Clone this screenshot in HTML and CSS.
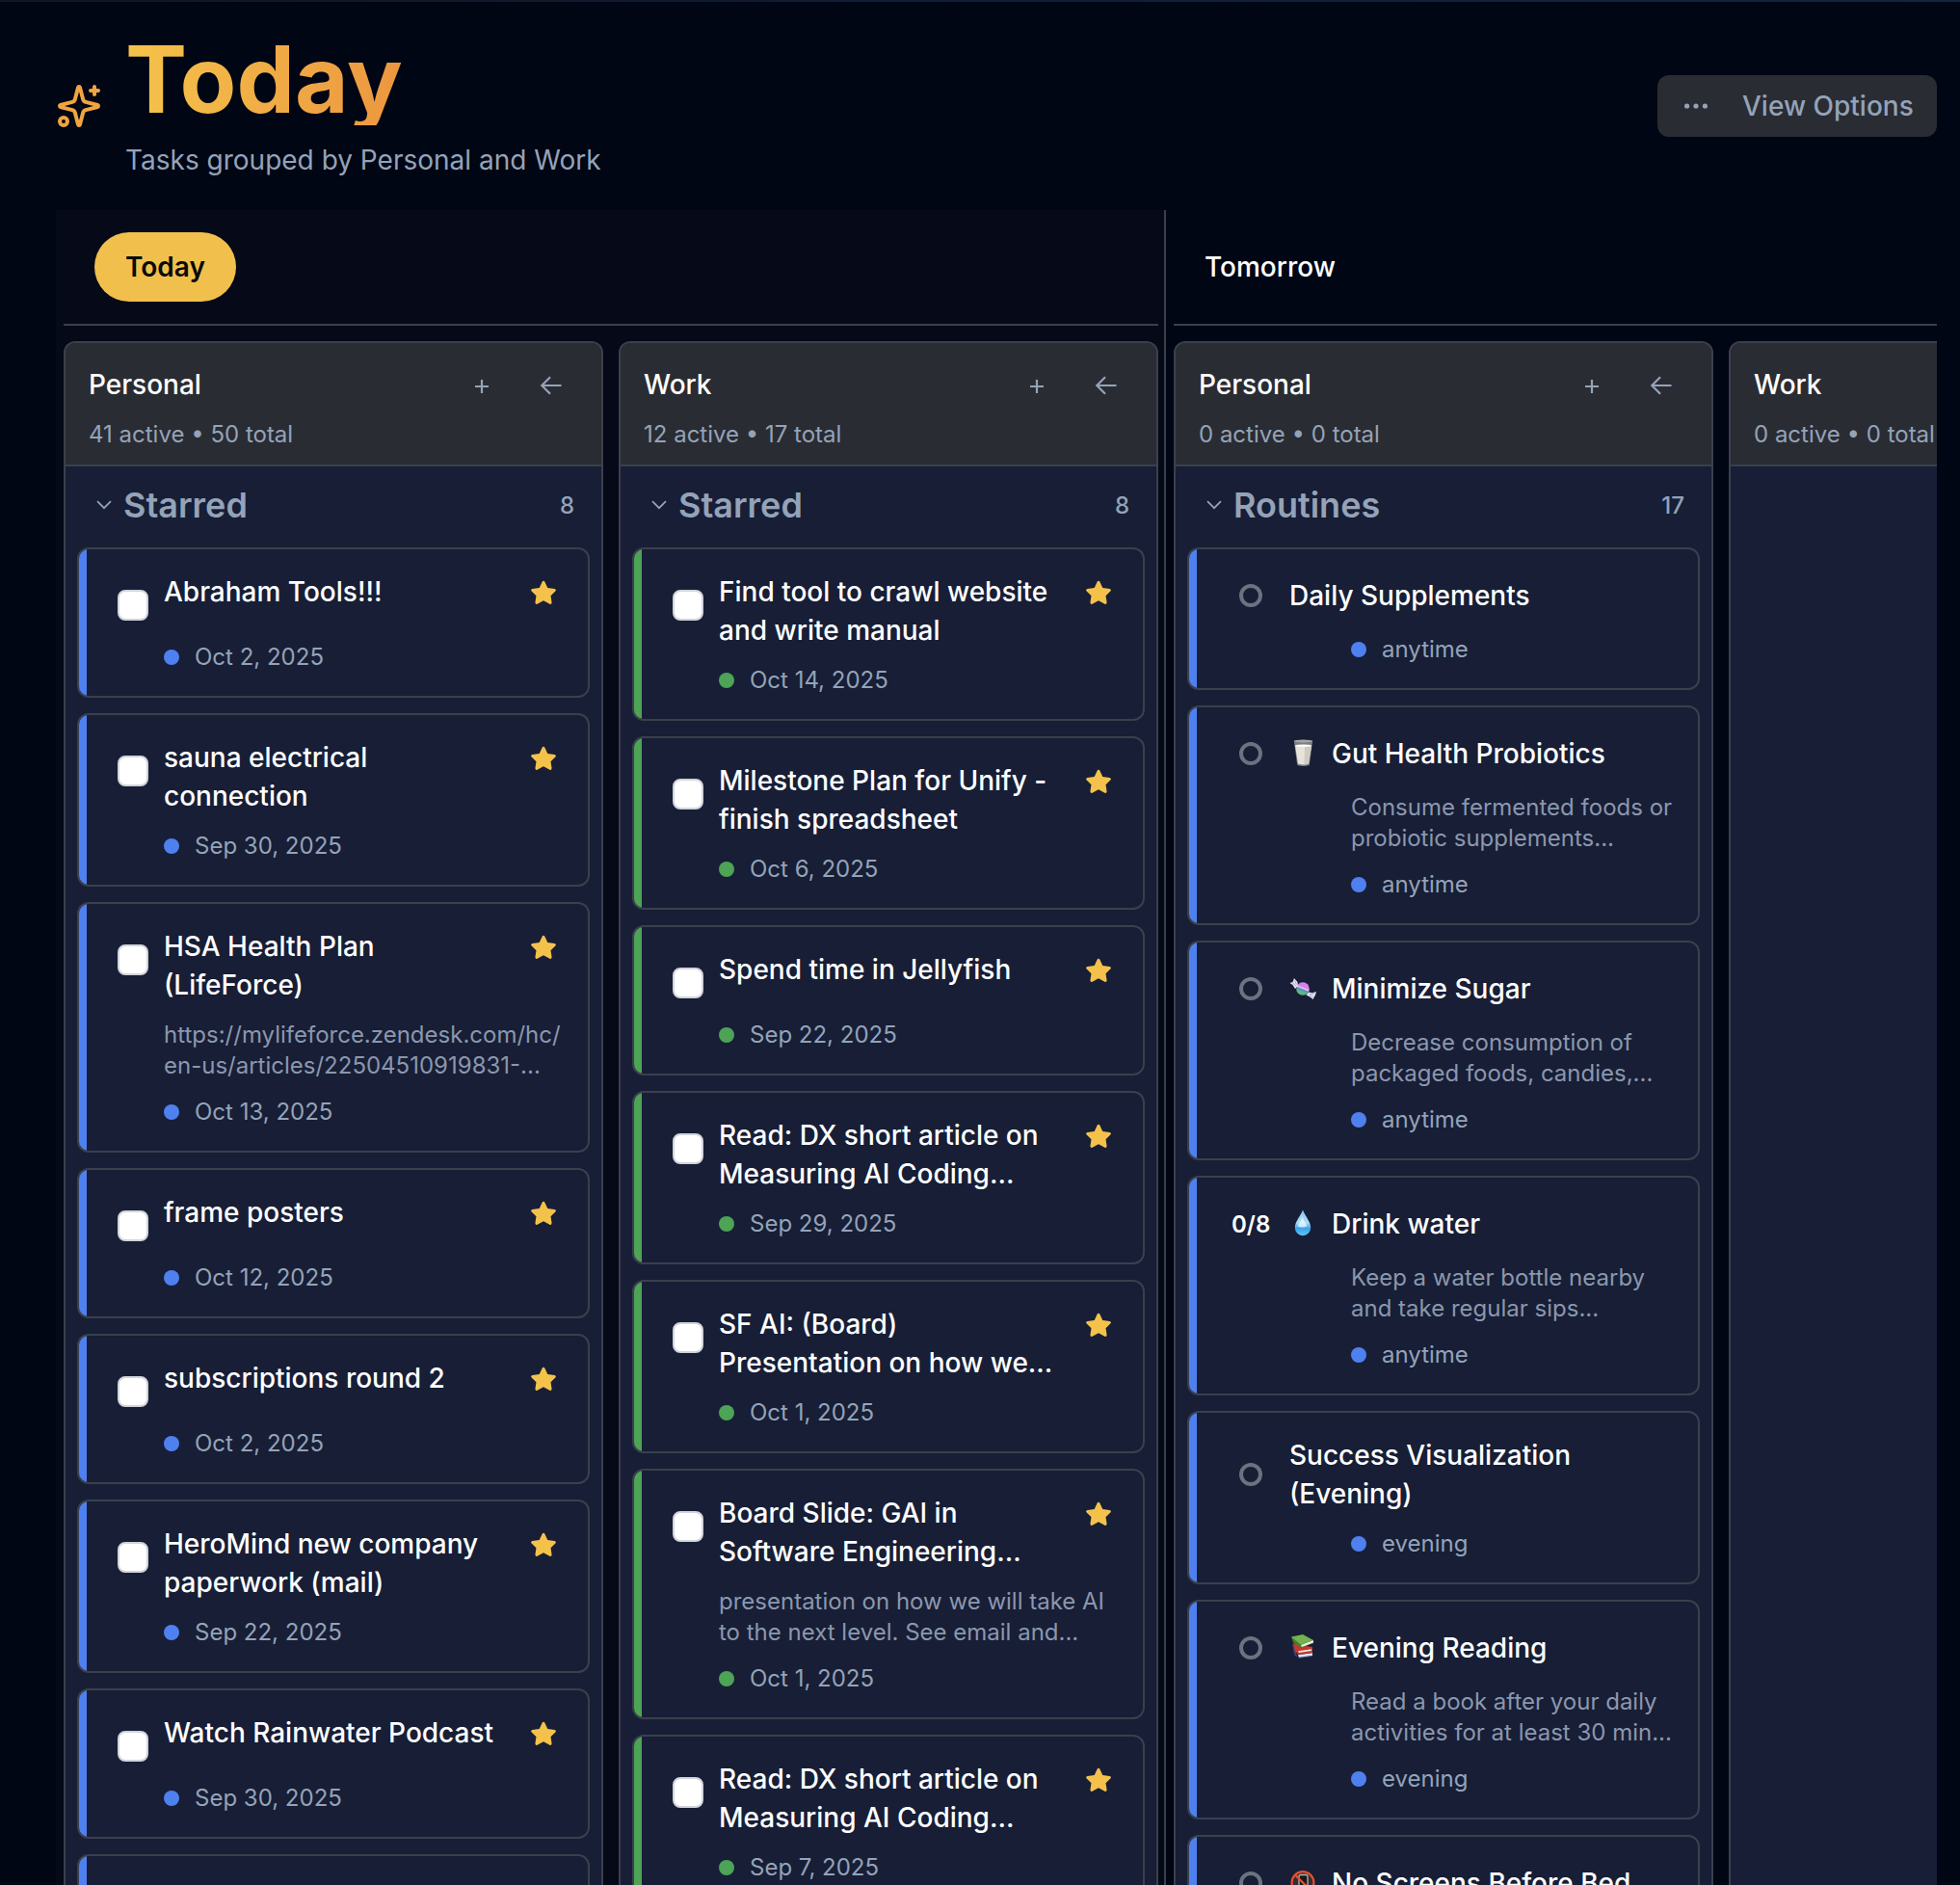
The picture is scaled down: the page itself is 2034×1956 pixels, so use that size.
FILE: index.html
```html
<!DOCTYPE html>
<html lang="en">
<head>
<meta charset="utf-8">
<title>Today</title>
<link rel="stylesheet" href="styles.css">
</head>
<body>
<svg class="sprite" aria-hidden="true">
  <symbol id="star" viewBox="0 0 28 28"><path d="M14 2.6 Q14.9 2.6 15.4 3.7 L18 9.3 L24.700 10.300 Q26.900 10.900 25.500 12.700 L21 17.100 L22 23.400 Q22.100 25.700 20 24.900 L14 21.800 L8 24.900 Q5.900 25.700 6 23.400 L7 17.100 L2.500 12.700 Q1.100 10.900 3.300 10.300 L10 9.300 L12.600 3.700 Q13.100 2.600 14 2.600 Z" fill="#f4c24b"/></symbol>
  <symbol id="plus" viewBox="0 0 16 16"><path d="M8 1v14M1 8h14" stroke="currentColor" stroke-width="2.200" fill="none"/></symbol>
  <symbol id="arrow" viewBox="0 0 24 20"><path d="M22.500 10H2.500M11 1.300L2.300 10L11 18.700" stroke="currentColor" stroke-width="2.200" fill="none"/></symbol>
  <symbol id="chev" viewBox="0 0 16 10"><path d="M1 1.200l7 7l7-7" stroke="currentColor" stroke-width="1.700" fill="none"/></symbol>
</svg>
<div class="app">
  <header class="top">
    <svg class="sparkle" viewBox="0 0 24 24"><path d="M9.937 15.500A2 2 0 0 0 8.500 14.063l-6.135-1.582a.5.5 0 0 1 0-.962L8.500 9.936A2 2 0 0 0 9.937 8.500l1.582-6.135a.5.5 0 0 1 .963 0L14.063 8.500A2 2 0 0 0 15.500 9.937l6.135 1.581a.5.5 0 0 1 0 .964L15.500 14.063a2 2 0 0 0-1.437 1.437l-1.582 6.135a.5.5 0 0 1-.963 0zM20 2v4M22 4h-4"/><circle cx="4" cy="20" r="2"/></svg>
    <div class="heading">
      <h1>Today</h1>
      <p>Tasks grouped by Personal and Work</p>
    </div>
    <button class="options"><svg class="dots" viewBox="0 0 24 6"><circle cx="2.600" cy="3" r="2.600"/><circle cx="12" cy="3" r="2.600"/><circle cx="21.400" cy="3" r="2.600"/></svg>View Options</button>
  </header>
  <main class="board">
    <section class="day current">
      <div class="day-head"><span class="pill">Today</span></div>
      <div class="lists">
        <div class="list blue">
          <div class="list-head"><div class="row"><h2>Personal</h2><svg class="plus"><use href="#plus"/></svg><svg class="arrow"><use href="#arrow"/></svg></div><p>41 active • 50 total</p></div>
          <div class="group"><svg class="chev"><use href="#chev"/></svg><h3>Starred</h3><span>8</span></div>
          <article class="card"><i class="check"></i><div class="body"><h4>Abraham Tools!!!</h4><div class="meta">Oct 2, 2025</div></div><svg class="star"><use href="#star"/></svg></article>
          <article class="card"><i class="check"></i><div class="body"><h4>sauna electrical<br>connection</h4><div class="meta">Sep 30, 2025</div></div><svg class="star"><use href="#star"/></svg></article>
          <article class="card"><i class="check"></i><div class="body"><h4>HSA Health Plan<br>(LifeForce)</h4><p class="note">https://mylifeforce.zendesk.com/hc/<br>en-us/articles/22504510919831-...</p><div class="meta">Oct 13, 2025</div></div><svg class="star"><use href="#star"/></svg></article>
          <article class="card"><i class="check"></i><div class="body"><h4>frame posters</h4><div class="meta">Oct 12, 2025</div></div><svg class="star"><use href="#star"/></svg></article>
          <article class="card"><i class="check"></i><div class="body"><h4>subscriptions round 2</h4><div class="meta">Oct 2, 2025</div></div><svg class="star"><use href="#star"/></svg></article>
          <article class="card"><i class="check"></i><div class="body"><h4>HeroMind new company<br>paperwork (mail)</h4><div class="meta">Sep 22, 2025</div></div><svg class="star"><use href="#star"/></svg></article>
          <article class="card"><i class="check"></i><div class="body"><h4>Watch Rainwater Podcast</h4><div class="meta">Sep 30, 2025</div></div><svg class="star"><use href="#star"/></svg></article>
          <article class="card"></article>
        </div>
        <div class="list green">
          <div class="list-head"><div class="row"><h2>Work</h2><svg class="plus"><use href="#plus"/></svg><svg class="arrow"><use href="#arrow"/></svg></div><p>12 active • 17 total</p></div>
          <div class="group"><svg class="chev"><use href="#chev"/></svg><h3>Starred</h3><span>8</span></div>
          <article class="card"><i class="check"></i><div class="body"><h4>Find tool to crawl website<br>and write manual</h4><div class="meta">Oct 14, 2025</div></div><svg class="star"><use href="#star"/></svg></article>
          <article class="card"><i class="check"></i><div class="body"><h4>Milestone Plan for Unify -<br>finish spreadsheet</h4><div class="meta">Oct 6, 2025</div></div><svg class="star"><use href="#star"/></svg></article>
          <article class="card"><i class="check"></i><div class="body"><h4>Spend time in Jellyfish</h4><div class="meta">Sep 22, 2025</div></div><svg class="star"><use href="#star"/></svg></article>
          <article class="card"><i class="check"></i><div class="body"><h4>Read: DX short article on<br>Measuring AI Coding...</h4><div class="meta">Sep 29, 2025</div></div><svg class="star"><use href="#star"/></svg></article>
          <article class="card"><i class="check"></i><div class="body"><h4>SF AI: (Board)<br>Presentation on how we...</h4><div class="meta">Oct 1, 2025</div></div><svg class="star"><use href="#star"/></svg></article>
          <article class="card"><i class="check"></i><div class="body"><h4>Board Slide: GAI in<br>Software Engineering...</h4><p class="note">presentation on how we will take AI<br>to the next level. See email and...</p><div class="meta">Oct 1, 2025</div></div><svg class="star"><use href="#star"/></svg></article>
          <article class="card"><i class="check"></i><div class="body"><h4>Read: DX short article on<br>Measuring AI Coding...</h4><div class="meta">Sep 7, 2025</div></div><svg class="star"><use href="#star"/></svg></article>
        </div>
      </div>
    </section>
    <section class="day next">
      <div class="day-head"><span class="label">Tomorrow</span></div>
      <div class="lists">
        <div class="list blue">
          <div class="list-head"><div class="row"><h2>Personal</h2><svg class="plus"><use href="#plus"/></svg><svg class="arrow"><use href="#arrow"/></svg></div><p>0 active • 0 total</p></div>
          <div class="group"><svg class="chev"><use href="#chev"/></svg><h3>Routines</h3><span>17</span></div>
          <article class="routine"><div class="line"><i class="ring"></i><h4>Daily Supplements</h4></div><div class="meta">anytime</div></article>
          <article class="routine"><div class="line"><i class="ring"></i><svg class="emoji" viewBox="0 0 28 30"><path d="M4.800 1.500h19.400l-3.400 25.500q-6 2-12.600 0z" fill="#7d7e81"/><path d="M6 6.500h17l-3 19q-5.500 1.800-11 0z" fill="#e6e3dc"/><path d="M16 7h7l-3 18.500q-2 .8-4.500.9z" fill="#cfcbc2"/><ellipse cx="14.500" cy="2" rx="9.600" ry="1.400" fill="#a7a7a7"/><ellipse cx="14.500" cy="6.800" rx="8.500" ry="1.400" fill="#fbfaf6"/></svg><h4>Gut Health Probiotics</h4></div><p class="note">Consume fermented foods or<br>probiotic supplements...</p><div class="meta">anytime</div></article>
          <article class="routine"><div class="line"><i class="ring"></i><svg class="emoji" viewBox="0 0 28 30"><defs><linearGradient id="sweet" x1=".7" y1="0" x2=".3" y2="1"><stop offset="0" stop-color="#c98cf2"/><stop offset=".35" stop-color="#e07be6"/><stop offset=".48" stop-color="#e9c8f2"/><stop offset=".56" stop-color="#4f8fc4"/><stop offset=".72" stop-color="#5fb78f"/><stop offset="1" stop-color="#63b56f"/></linearGradient></defs><path d="M.5 9l3-1L5 4l3.500 4 .5 4-3 3-2.500-4zM20 18.500l4 .8 4-1.300-1 3.500-2.500 4.500-3-2.500-4-2z" fill="#e6e3f0"/><path d="M3 8.500l4 3.500M5.500 6.500l2 4M21 21l4 3M21 20.500l5-.5" stroke="#aaa5c2" stroke-width=".9"/><circle cx="14" cy="15" r="6.800" fill="url(#sweet)"/></svg><h4>Minimize Sugar</h4></div><p class="note">Decrease consumption of<br>packaged foods, candies,...</p><div class="meta">anytime</div></article>
          <article class="routine"><div class="line"><b class="count">0/8</b><svg class="emoji" viewBox="0 0 28 30"><defs><linearGradient id="drop" x1="0" y1="0" x2="0" y2="1"><stop offset="0" stop-color="#8cc6ee"/><stop offset=".5" stop-color="#a9dcf8"/><stop offset=".72" stop-color="#3aa3ea"/><stop offset="1" stop-color="#65c4f7"/></linearGradient></defs><path d="M14 .5c2 6 8.200 12 8.200 18.500a8.200 8.200 0 0 1-16.400 0c0-6.500 6.200-12.500 8.200-18.500z" fill="url(#drop)"/><path d="M13.500 7c1 5 4.500 7 4.500 10.500q-4.500 2-9 0c0-3 4-6 4.500-10.500z" fill="#eaf7fe" opacity=".8"/></svg><h4>Drink water</h4></div><p class="note">Keep a water bottle nearby<br>and take regular sips...</p><div class="meta">anytime</div></article>
          <article class="routine"><div class="line"><i class="ring"></i><h4>Success Visualization<br>(Evening)</h4></div><div class="meta">evening</div></article>
          <article class="routine"><div class="line"><i class="ring"></i><svg class="emoji" viewBox="0 0 28 30"><path d="M3 10l3 3 2 12-3-3zM8 21l16-1v4l-14 2z" fill="#33437f"/><path d="M9 22.300l15-2v2.500l-14 2z" fill="#e4e4ea"/><path d="M4 10l2 9 4 3 14-2v-6l-12-2z" fill="#c23a2c"/><path d="M9 18.200l14-2v1.800l-13 2z" fill="#f1e4dd"/><path d="M2 3.500L4 9l8 6 13-5V7z" fill="#477f2f"/><path d="M12 12l13-5v2.500l-12 4.500z" fill="#f2f0e8"/><path d="M2 3.500L14 1l11 6-13 4.500z" fill="#74b150"/></svg><h4>Evening Reading</h4></div><p class="note">Read a book after your daily<br>activities for at least 30 min...</p><div class="meta">evening</div></article>
          <article class="routine"><div class="line"><i class="ring"></i><svg class="emoji" viewBox="0 0 28 30"><circle cx="14" cy="14.500" r="11.500" fill="#3a2b2f"/><rect x="10" y="6.500" width="9" height="17" rx="1.500" fill="#17191d" stroke="#b4b4b8" stroke-width="1.300"/><circle cx="14" cy="14.500" r="11.400" fill="none" stroke="#e5502f" stroke-width="2.200"/><path d="M6 6.500l16 16" stroke="#e5502f" stroke-width="2.200"/></svg><h4>No Screens Before Bed</h4></div></article>
        </div>
        <div class="list blue">
          <div class="list-head"><div class="row"><h2>Work</h2></div><p>0 active • 0 total</p></div>
        </div>
      </div>
    </section>
  </main>
</div>
</body>
</html>
```
FILE: styles.css
```css
* { box-sizing: border-box; }
html, body { margin: 0; height: 100%; overflow: hidden; }
body { background: #010614; color: #fff; font-family: Inter, sans-serif; }
h1, h2, h3, h4, p { margin: 0; }
.sprite { position: absolute; width: 0; height: 0; }
.app { display: flex; flex-direction: column; height: 1956px; padding: 2px 24px 0 58px; overflow: hidden; background: linear-gradient(to right, #0d1728, #15233d) top / 100% 2px no-repeat; }
.top { height: 216px; flex: none; display: flex; align-items: center; }
.sparkle { width: 48px; height: 48px; flex: none; fill: none; stroke: #f0a540; stroke-width: 2; stroke-linecap: round; stroke-linejoin: round; }
.heading { margin-left: 24px; flex: 1; }
h1 { width: max-content; font-size: 96px; line-height: 96px; height: 96px; font-weight: 700; color: transparent; background: linear-gradient(to right, #f4c44b, #ec9640); -webkit-background-clip: text; background-clip: text; }
.heading p { margin-top: 16px; font-size: 28px; line-height: 40px; color: #94a3b8; }
.options { width: 290px; height: 64px; display: flex; align-items: center; border: 0; border-radius: 12px; background: #2a2c33; color: #94a3b8; font: 500 28px/40px Inter, sans-serif; padding: 0 0 0 28px; white-space: nowrap; }
.dots { width: 24px; height: 6px; fill: currentColor; margin-right: 36px; }
.board { flex: 1; min-height: 0; display: flex; overflow: hidden; }
.day { flex: none; height: 100%; }
.current { width: 1152px; background: #060917; border-right: 2px solid #3a404c; padding: 0 6px 0 8px; }
.next { width: 1160px; padding: 0 8px; }
.day-head { height: 120px; border-bottom: 2px solid #3a404c; display: flex; align-items: center; padding-left: 32px; font-size: 28px; font-weight: 500; }
.pill { height: 72px; line-height: 72px; padding: 0 32px; border-radius: 36px; background: #f1c04c; color: #0a0a0a; font-weight: 600; }
.lists { display: flex; gap: 16px; margin-top: 16px; }
.list { width: 560px; flex: none; height: 1700px; background: #171e36; border: 2px solid #3a404c; border-radius: 12px; overflow: hidden; }
.list-head { height: 128px; background: #2a2c33; border-bottom: 2px solid #3a404c; padding: 22px 24px 0; }
.row { display: flex; align-items: center; height: 44px; color: #94a3b8; padding-right: 16px; }
h2 { flex: 1; color: #fff; font-size: 28px; line-height: 42px; font-weight: 500; padding-bottom: 2px; }
.plus { width: 16px; height: 16px; margin: 2px 52px 0 0; }
.arrow { width: 24px; height: 20px; }
.list-head p { font-size: 24px; line-height: 32px; color: #94a3b8; margin-top: 13px; }
.group { height: 84px; display: flex; align-items: center; padding: 0 28px 4px 32px; color: #94a3b8; }
.chev { width: 16px; height: 10px; margin-right: 12px; }
h3 { flex: 1; font-size: 36px; font-weight: 600; line-height: 56px; }
.group span { font-size: 24px; font-weight: 500; }
.card, .routine { border: 2px solid #3a404c; border-radius: 12px; margin: 0 12px 16px; padding: 24px 24px 24px 40px; background: linear-gradient(to right, #4f80f0 8px, transparent 8px); }
.green .card { background: linear-gradient(to right, #4da356 8px, transparent 8px); }
.card { display: flex; min-height: 156px; }
.check { width: 32px; height: 32px; flex: none; margin: 18px 16px 0 0; border: 2px solid #d1d5db; border-radius: 8px; background: #fff; }
.body { flex: 1; display: flex; flex-direction: column; white-space: nowrap; min-width: 0; }
h4 { font-size: 28px; line-height: 40px; font-weight: 500; white-space: nowrap; }
.star { width: 30px; height: 30px; flex: none; margin: 6px 7px 0 0; }
.meta { display: flex; align-items: center; margin-top: 16px; height: 32px; font-size: 24px; line-height: 32px; color: #94a3b8; gap: 16px; }
.body .meta { margin-top: auto; }
.body h4:has(br) + .meta, .body .note + .meta { margin-top: 16px; }
.meta::before { content: ""; width: 16px; height: 16px; border-radius: 50%; background: #4f80f0; }
.green .meta::before { background: #4da356; }
.note { font-size: 24px; line-height: 32px; color: #8b97ad; margin-top: 16px; white-space: nowrap; }
.routine { padding-left: 32px; }
.line { display: flex; align-items: center; min-height: 48px; }
.ring { width: 24px; height: 24px; flex: none; border: 4px solid #6b7280; border-radius: 50%; margin: 0 28px 0 20px; }
.count { width: 44px; margin: 0 16px 0 12px; font-size: 24px; font-weight: 600; }
.emoji { width: 28px; height: 30px; margin-right: 16px; }
.routine .note, .routine .meta { margin-left: 136px; }
```
